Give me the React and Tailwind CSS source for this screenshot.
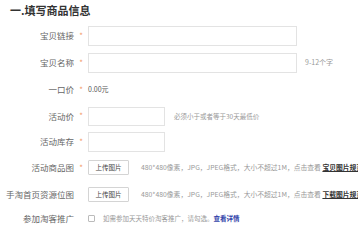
import React from "react";

const font = { fontFamily: '"Noto Sans CJK SC", "Noto Sans", sans-serif' };

function Row({ label, required = true, h, children }) {
  return (
    <div className="flex items-center" style={{ height: h }}>
      <div className="w-[74px] shrink-0 text-right text-[8.5px] leading-tight text-[#666] whitespace-nowrap">{label}</div>
      <div className="w-[14px] shrink-0 text-center text-[8px] leading-tight text-[#f39a6b]">{required ? "*" : ""}</div>
      <div className="flex items-center min-w-0 flex-1 whitespace-nowrap">{children}</div>
    </div>
  );
}

function Input({ w, h = 20 }) {
  return <div className="shrink-0 border border-[#e3e3e3] bg-white" style={{ width: w, height: h }} />;
}

function Upload() {
  return (
    <div className="shrink-0 w-[41px] h-[15px] border border-[#d4d4d4] rounded-[1px] bg-white flex items-center justify-center text-[6.5px] leading-tight text-[#444]">
      上传图片
    </div>
  );
}

export default function App() {
  return (
    <div className="w-[358px] h-[230px] bg-white overflow-hidden" style={font}>
      <div className="h-[22px] flex items-center pl-[10px] text-[11px] font-bold text-[#333] leading-tight">一.填写商品信息</div>
      <Row label="宝贝链接" h={27}>
        <Input w={209} />
      </Row>
      <Row label="宝贝名称" h={27}>
        <Input w={209} />
        <span className="ml-[8px] text-[7px] text-[#999] leading-tight">9-12个字</span>
      </Row>
      <Row label="一口价" h={27}>
        <span className="text-[7px] text-[#555] leading-tight">0.00元</span>
      </Row>
      <Row label="活动价" h={26}>
        <Input w={77} h={19} />
        <span className="ml-[9px] text-[6.5px] text-[#999] leading-tight">必须小于或者等于30天最低价</span>
      </Row>
      <Row label="活动库存" h={25}>
        <Input w={77} />
      </Row>
      <Row label="活动商品图" h={27}>
        <Upload />
        <span className="ml-[12px] text-[6.8px] text-[#999] leading-tight">
          480*480像素，JPG，JPEG格式，大小不超过1M，点击查看 <span className="font-bold text-[#333] underline">宝贝图片规范</span>
        </span>
      </Row>
      <Row label="手淘首页资源位图" required={false} h={26}>
        <Upload />
        <span className="ml-[12px] text-[6.8px] text-[#999] leading-tight">
          480*480像素，JPG，JPEG格式，大小不超过1M，点击查看 <span className="font-bold text-[#333] underline">下载图片规范</span>
        </span>
      </Row>
      <Row label="参加淘客推广" required={false} h={22}>
        <div className="shrink-0 w-[7px] h-[7px] border border-[#bbb] rounded-[1px] bg-white" />
        <span className="ml-[8px] text-[6.5px] text-[#999] leading-tight">
          如需参加天天特价淘客推广，请勾选。<span className="font-bold text-[#3344aa]">查看详情</span>
        </span>
      </Row>
    </div>
  );
}
